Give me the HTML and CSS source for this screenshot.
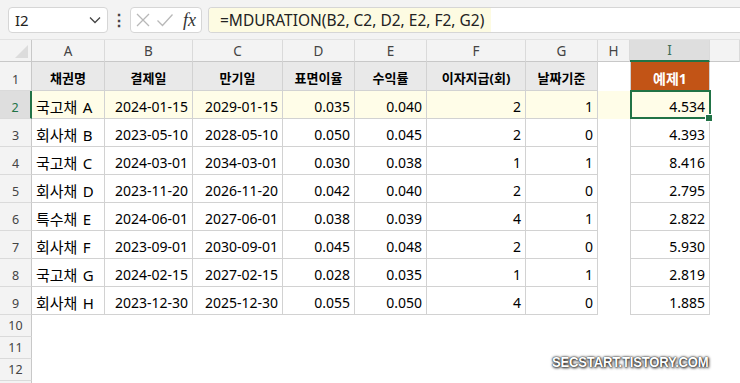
FILE: index.html
```html
<!DOCTYPE html>
<html lang="ko">
<head>
    <meta charset="UTF-8">
    <title>MDURATION 예제</title>
    <link rel="stylesheet" href="styles.css">
</head>
<body>
    <div class="toolbar">
        <div class="namebox">
            <span>I2</span>
            <svg class="chev" width="12" height="8" viewBox="0 0 12 8"><path d="M1 1.5 L6 6.5 L11 1.5" fill="none" stroke="#444" stroke-width="1.3"/></svg>
        </div>
        <span class="dots">⋮</span>
        <div class="fxbox">
            <svg width="16" height="16" viewBox="0 0 16 16"><path d="M2 2 L14 14 M14 2 L2 14" stroke="#b8b8b8" stroke-width="1.3"/></svg>
            <svg width="18" height="16" viewBox="0 0 18 16"><path d="M1.5 8.5 L6.5 13.5 L16.5 2.5" fill="none" stroke="#b8b8b8" stroke-width="1.3"/></svg>
            <span class="fx">fx</span>
        </div>
        <div class="formula">
            <span class="formula-text">=MDURATION(B2, C2, D2, E2, F2, G2)</span>
        </div>
    </div>

    <div class="sheet">
        <!-- column headers -->
        <div class="corner"></div>
        <div class="ch">A</div>
        <div class="ch">B</div>
        <div class="ch">C</div>
        <div class="ch">D</div>
        <div class="ch">E</div>
        <div class="ch">F</div>
        <div class="ch">G</div>
        <div class="ch">H</div>
        <div class="ch sel">I</div>
        <div class="ch"></div>

        <!-- row 1 -->
        <div class="rh">1</div>
        <div class="c head">채권명</div>
        <div class="c head">결제일</div>
        <div class="c head">만기일</div>
        <div class="c head">표면이율</div>
        <div class="c head">수익률</div>
        <div class="c head">이자지급(회)</div>
        <div class="c head">날짜기준</div>
        <div class="blank"></div>
        <div class="c i title">예제1</div>
        <div class="blank"></div>

        <!-- row 2 -->
        <div class="rh sel">2</div>
        <div class="c hl name">국고채 A</div>
        <div class="c hl num">2024-01-15</div>
        <div class="c hl num">2029-01-15</div>
        <div class="c hl num">0.035</div>
        <div class="c hl num">0.040</div>
        <div class="c hl num">2</div>
        <div class="c hl num">1</div>
        <div class="blank hl"></div>
        <div class="c i hl num active">4.534</div>
        <div class="blank"></div>

        <div class="rh">3</div>
        <div class="c name">회사채 B</div>
        <div class="c num">2023-05-10</div>
        <div class="c num">2028-05-10</div>
        <div class="c num">0.050</div>
        <div class="c num">0.045</div>
        <div class="c num">2</div>
        <div class="c num">0</div>
        <div class="blank"></div>
        <div class="c i num">4.393</div>
        <div class="blank"></div>

        <div class="rh">4</div>
        <div class="c name">국고채 C</div>
        <div class="c num">2024-03-01</div>
        <div class="c num">2034-03-01</div>
        <div class="c num">0.030</div>
        <div class="c num">0.038</div>
        <div class="c num">1</div>
        <div class="c num">1</div>
        <div class="blank"></div>
        <div class="c i num">8.416</div>
        <div class="blank"></div>

        <div class="rh">5</div>
        <div class="c name">회사채 D</div>
        <div class="c num">2023-11-20</div>
        <div class="c num">2026-11-20</div>
        <div class="c num">0.042</div>
        <div class="c num">0.040</div>
        <div class="c num">2</div>
        <div class="c num">0</div>
        <div class="blank"></div>
        <div class="c i num">2.795</div>
        <div class="blank"></div>

        <div class="rh">6</div>
        <div class="c name">특수채 E</div>
        <div class="c num">2024-06-01</div>
        <div class="c num">2027-06-01</div>
        <div class="c num">0.038</div>
        <div class="c num">0.039</div>
        <div class="c num">4</div>
        <div class="c num">1</div>
        <div class="blank"></div>
        <div class="c i num">2.822</div>
        <div class="blank"></div>

        <div class="rh">7</div>
        <div class="c name">회사채 F</div>
        <div class="c num">2023-09-01</div>
        <div class="c num">2030-09-01</div>
        <div class="c num">0.045</div>
        <div class="c num">0.048</div>
        <div class="c num">2</div>
        <div class="c num">0</div>
        <div class="blank"></div>
        <div class="c i num">5.930</div>
        <div class="blank"></div>

        <div class="rh">8</div>
        <div class="c name">국고채 G</div>
        <div class="c num">2024-02-15</div>
        <div class="c num">2027-02-15</div>
        <div class="c num">0.028</div>
        <div class="c num">0.035</div>
        <div class="c num">1</div>
        <div class="c num">1</div>
        <div class="blank"></div>
        <div class="c i num">2.819</div>
        <div class="blank"></div>

        <div class="rh">9</div>
        <div class="c name">회사채 H</div>
        <div class="c num">2023-12-30</div>
        <div class="c num">2025-12-30</div>
        <div class="c num">0.055</div>
        <div class="c num">0.050</div>
        <div class="c num">4</div>
        <div class="c num">0</div>
        <div class="blank"></div>
        <div class="c i num">1.885</div>
        <div class="blank"></div>

        <div class="rh">10</div>
        <div class="empty-row"></div>
        <div class="rh">11</div>
        <div class="empty-row"></div>
        <div class="rh">12</div>
        <div class="empty-row"></div>
        <div class="rh"></div>
        <div class="empty-row"></div>
    </div>

    <div class="watermark">SECSTART.TISTORY.COM</div>
</body>
</html>
```

FILE: styles.css
```css
* {
    margin: 0;
    padding: 0;
    box-sizing: border-box;
}

body {
    font-family: 'Noto Sans', 'Noto Sans CJK KR', sans-serif;
    background: white;
    color: #000;
    width: 740px;
    height: 383px;
    overflow: hidden;
    position: relative;
}

/* formula bar */
.toolbar {
    height: 40px;
    background: #f3f3f3;
    display: flex;
    align-items: flex-start;
    padding: 7px 0 0 8px;
    border-bottom: 1px solid #e2e2e2;
}

.namebox {
    width: 100px;
    height: 26px;
    background: white;
    border: 1px solid #d6d6d6;
    border-radius: 4px;
    display: flex;
    align-items: center;
    justify-content: space-between;
    padding: 0 6px 0 6px;
    font-size: 15px;
    color: #222;
}

.dots {
    width: 22px;
    text-align: center;
    font-size: 16px;
    font-weight: bold;
    color: #444;
    line-height: 26px;
}

.fxbox {
    width: 72px;
    height: 26px;
    background: white;
    border: 1px solid #d6d6d6;
    border-radius: 4px;
    display: flex;
    align-items: center;
    gap: 5px;
    padding-left: 4px;
}

.fx {
    font-family: 'Liberation Serif', serif;
    font-style: italic;
    font-size: 18px;
    color: #333;
    margin-left: 4px;
}

.formula {
    flex: 1;
    height: 26px;
    margin-left: 6px;
    background: white;
    border: 1px solid #d6d6d6;
    border-right: none;
    border-radius: 4px 0 0 4px;
    overflow: hidden;
}

.formula-text {
    display: inline-block;
    height: 100%;
    background: #fdfbe2;
    padding: 0 7px 0 11px;
    font-size: 15.5px;
    line-height: 24px;
    color: #222;
}

/* grid */
.sheet {
    display: grid;
    grid-template-columns: 32px 73px 88px 90px 72px 72px 99px 72px 32px 80px 1fr;
    grid-template-rows: 22px 29px repeat(8, 28px) repeat(3, 22px) 1fr;
    height: 343px;
    overflow: hidden;
    font-size: 14px;
}

.corner {
    background: #f3f3f3;
    border-right: 1px solid #c8c8c8;
    border-bottom: 1px solid #c8c8c8;
    position: relative;
}

.corner::after {
    content: "";
    position: absolute;
    right: 3px;
    bottom: 3px;
    border-left: 13px solid transparent;
    border-bottom: 13px solid #dcdcdc;
}

.ch {
    background: #f3f3f3;
    border-right: 1px solid #dadada;
    border-bottom: 1px solid #c8c8c8;
    color: #444;
    font-size: 13.5px;
    display: flex;
    align-items: center;
    justify-content: center;
}

.ch.sel {
    background: #dedede;
    border-bottom: 2px solid #217346;
    color: #3c6e58;
}

.rh {
    background: #f3f3f3;
    border-right: 1px solid #c8c8c8;
    border-bottom: 1px solid #dadada;
    color: #444;
    font-size: 12.5px;
    display: flex;
    align-items: flex-end;
    justify-content: center;
    padding-bottom: 2px;
}

.rh.sel {
    background: #dedede;
    border-right: 2px solid #217346;
    color: #217346;
}

.c {
    border-right: 1px solid #d2d2d2;
    border-bottom: 1px solid #d2d2d2;
    display: flex;
    align-items: center;
    padding: 3px 4px 0 4px;
    white-space: nowrap;
}

.name {
    font-size: 15px;
    word-spacing: 1.5px;
}

.num {
    justify-content: flex-end;
}

.head {
    background: #e9e9e9;
    font-weight: bold;
    font-size: 13px;
    justify-content: center;
}

.hl {
    background: #fffde8;
}

.i {
    border-left: 1px solid #d2d2d2;
}

.title {
    background: #c25416;
    color: white;
    font-weight: bold;
    justify-content: center;
}

.active {
    position: relative;
}

.active::after {
    content: "";
    position: absolute;
    left: -1px;
    top: -1px;
    right: -2px;
    bottom: -1px;
    border: 2px solid #217346;
}

.active::before {
    content: "";
    position: absolute;
    right: -4px;
    bottom: -4px;
    width: 6px;
    height: 6px;
    background: #217346;
    border: 1px solid white;
    z-index: 1;
}

.empty-row {
    grid-column: 2 / -1;
}

/* blog watermark */
.watermark {
    position: absolute;
    left: 552px;
    top: 353px;
    font-family: 'Liberation Sans', sans-serif;
    font-weight: bold;
    font-size: 15px;
    letter-spacing: -0.2px;
    color: white;
    text-shadow: 0 0 3px #222, 1px 1px 3px #333, 0 0 1px #000;
    transform: scaleX(0.87);
    transform-origin: left center;
}
```
